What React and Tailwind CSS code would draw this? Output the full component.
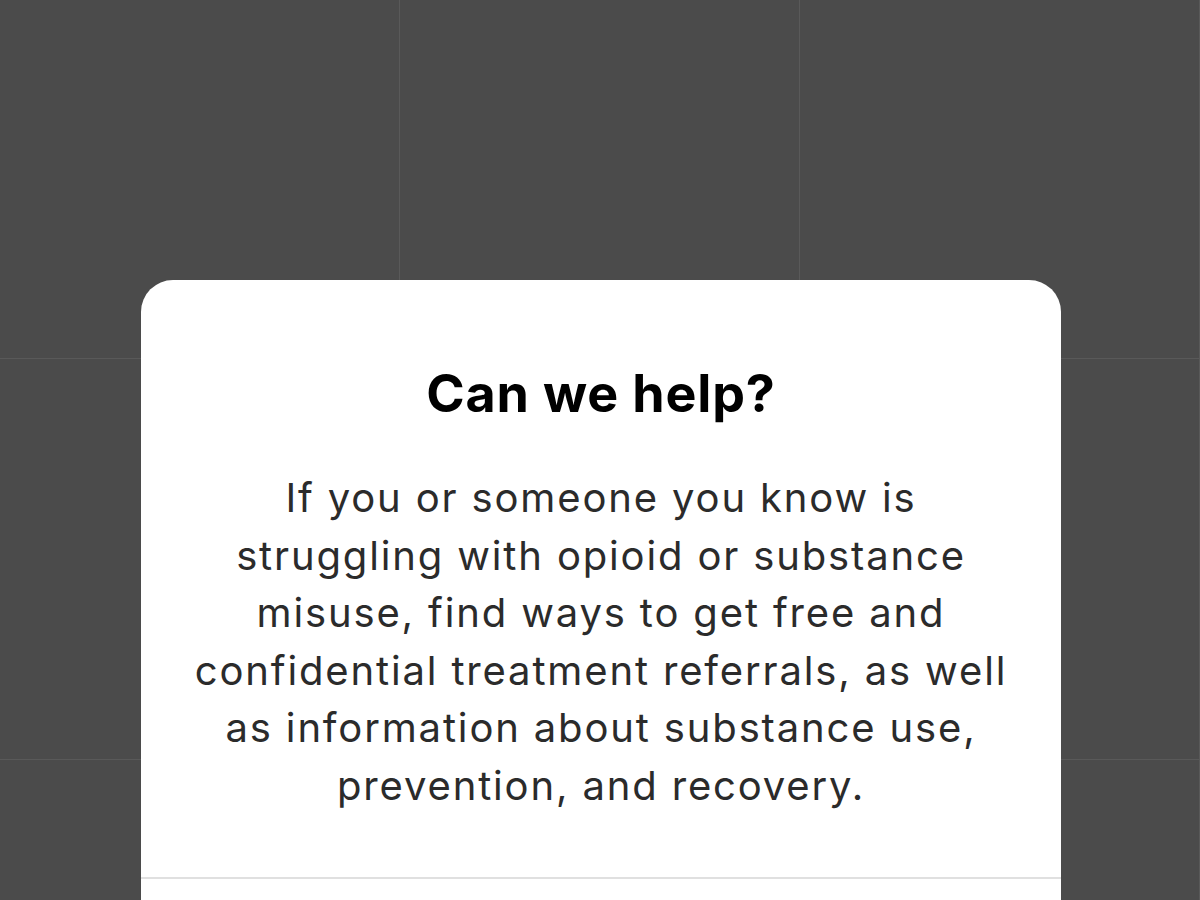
export default function App() {
  return (
    <div
      className="w-full h-[900px] overflow-hidden bg-[#4b4b4b] bg-[linear-gradient(to_right,#595959_1px,transparent_1px),linear-gradient(to_bottom,#595959_1px,transparent_1px)] bg-[size:400px_401px] bg-[position:399px_358px] flex flex-col pt-[280px] pl-[141px]"
      style={{ fontFamily: 'Inter, "Liberation Sans", sans-serif' }}
    >
      <div className="w-[920px] bg-white rounded-t-[32px] flex flex-col items-center pt-[83px] h-[700px]">
        <h1 className="text-[52px] leading-[62px] font-bold text-black tracking-[0.85px]">
          Can we help?
        </h1>
        <p className="mt-[44px] text-[40px] leading-[57.6px] text-[#2b2b2b] text-center tracking-[1.85px] whitespace-nowrap">
          If you or someone you know is
          <br />
          struggling with opioid or substance
          <br />
          misuse, find ways to get free and
          <br />
          confidential treatment referrals, as well
          <br />
          as information about substance use,
          <br />
          prevention, and recovery.
        </p>
        <div className="mt-[62px] w-full h-[2px] bg-[#e0e0e0]" />
      </div>
    </div>
  );
}
